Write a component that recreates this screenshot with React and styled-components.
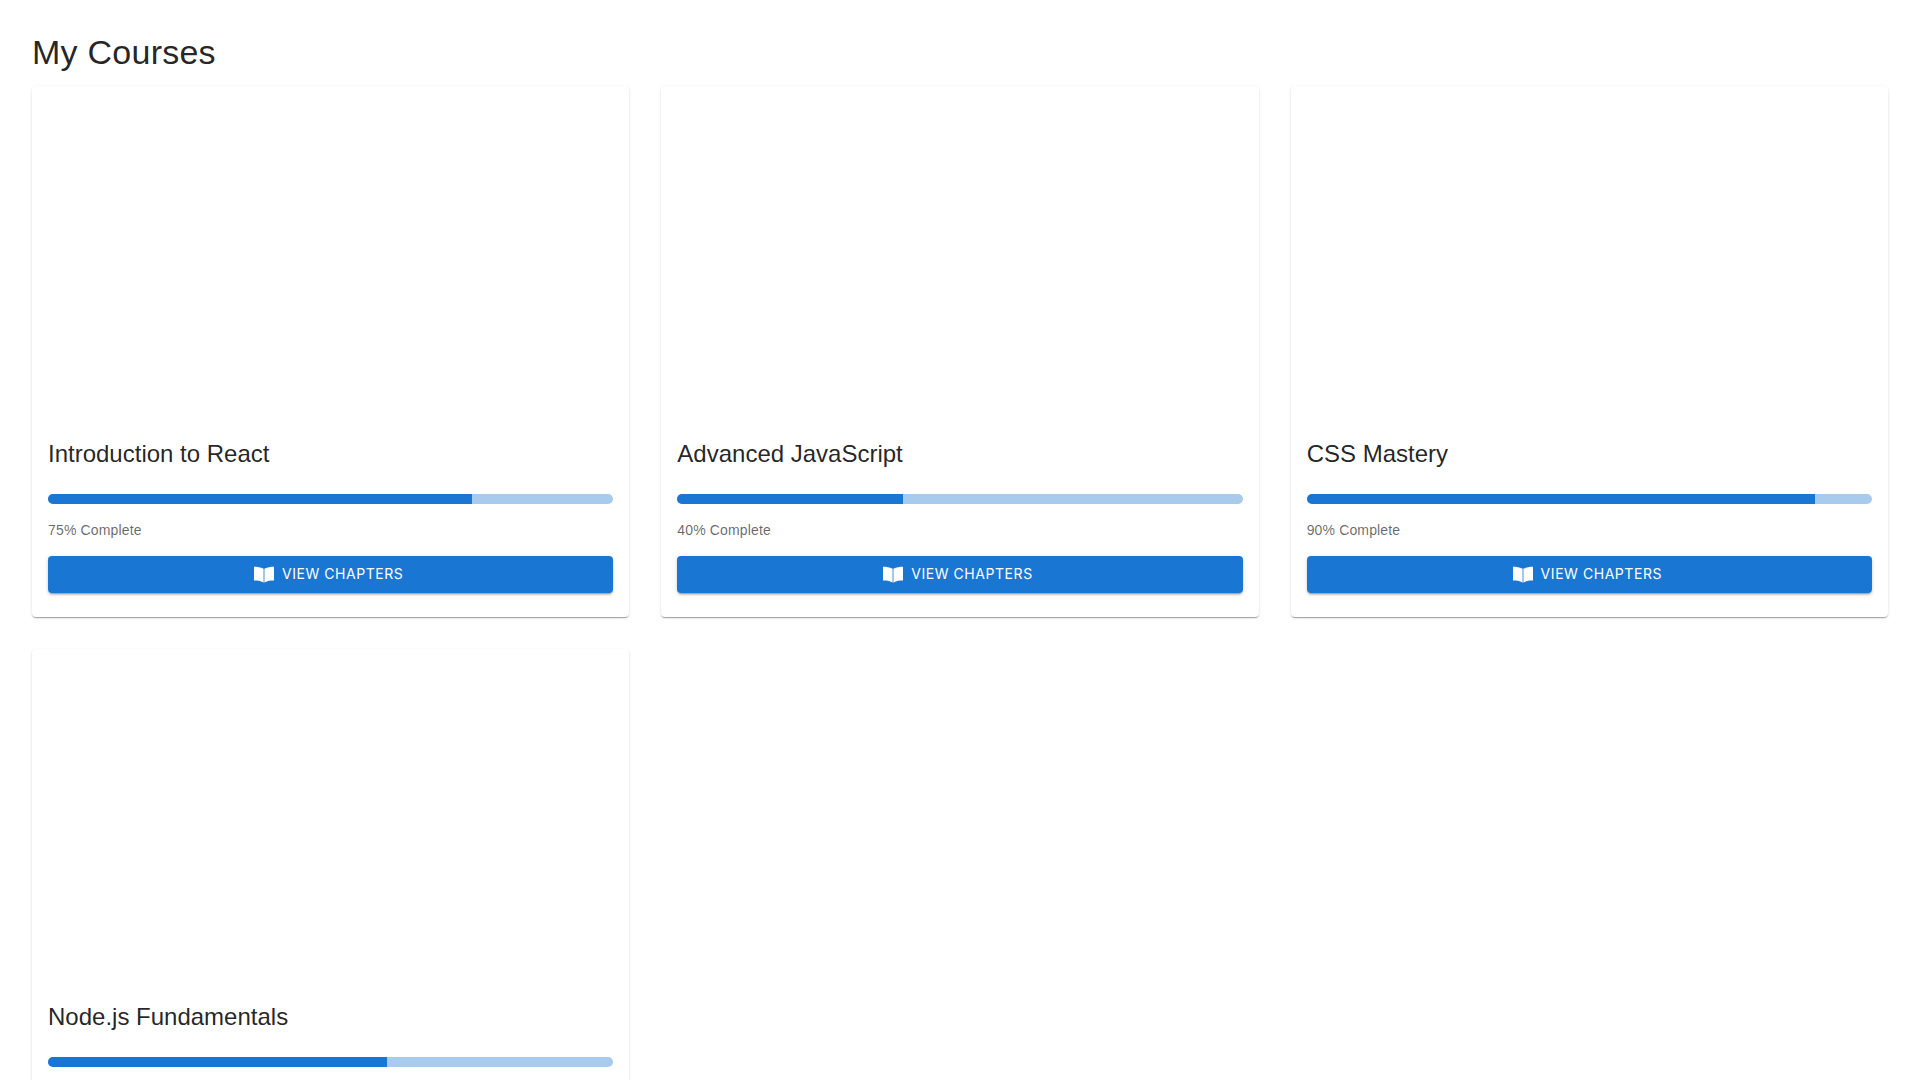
import React from 'react';
import styled, { createGlobalStyle } from 'styled-components';

const Global = createGlobalStyle`
  html, body { margin: 0; padding: 0; background: #fff; }
  body { font-family: "Liberation Sans", Arial, sans-serif; color: rgba(0,0,0,.87); }
`;

const Page = styled.main`
  padding: 31px 32px 32px;
`;
const Heading = styled.h1`
  margin: 0 0 13px;
  font: 400 34px/42px "Liberation Sans", Arial, sans-serif;
  letter-spacing: .25px;
`;
const Grid = styled.div`
  display: grid;
  grid-template-columns: repeat(3, 1fr);
  gap: 32px;
`;
const Card = styled.article`
  background: #fff;
  border-radius: 4px;
  overflow: hidden;
  box-shadow: 0 2px 1px -1px rgba(0,0,0,.2), 0 1px 1px 0 rgba(0,0,0,.14), 0 1px 3px 0 rgba(0,0,0,.12);
`;
const Media = styled.div`
  height: 336px;
`;
const Body = styled.div`
  padding: 16px 16px 24.5px;
`;
const Title = styled.h2`
  margin: 0 0 24px;
  font: 400 24px/32px "Liberation Sans", Arial, sans-serif;
`;
const Track = styled.div`
  height: 10px;
  border-radius: 5px;
  background: #a7caed;
  overflow: hidden;
  margin-bottom: 16px;
`;
const Fill = styled.div`
  height: 100%;
  background: #1976d2;
`;
const Progress = styled.p`
  margin: 0 0 16px;
  font: 400 14px/20px "Liberation Sans", Arial, sans-serif;
  letter-spacing: .15px;
  color: rgba(0,0,0,.6);
`;
const Button = styled.button`
  display: flex;
  align-items: center;
  justify-content: center;
  width: 100%;
  height: 36.5px;
  padding: 6px 16px;
  border: 0;
  border-radius: 4px;
  background: #1976d2;
  color: #fff;
  font: 400 14px/24.5px Inter, sans-serif;
  letter-spacing: .55px;
  text-transform: uppercase;
  box-shadow: 0 3px 1px -2px rgba(0,0,0,.2), 0 2px 2px 0 rgba(0,0,0,.14), 0 1px 5px 0 rgba(0,0,0,.12);
`;
const Icon = styled.svg`
  width: 20px;
  height: 20px;
  margin: 0 8px 0 -4px;
  fill: currentColor;
`;

const BookIcon = () => (
  <Icon viewBox="0 0 20 20" aria-hidden="true">
    <path d="M0 2.8C3.4 2.8 6.8 3.2 9 4.6V18.3C6.8 17 3.4 16.6 0 16.6Z" />
    <path d="M20 2.8C16.6 2.8 13.2 3.2 11 4.6V18.3C13.2 17 16.6 16.6 20 16.6Z" />
    <path d="M9 4.6H11V18.3L10 18.7 9 18.3Z" opacity=".6" />
  </Icon>
);

const courses = [
  { title: 'Introduction to React', progress: 75 },
  { title: 'Advanced JavaScript', progress: 40 },
  { title: 'CSS Mastery', progress: 90 },
  { title: 'Node.js Fundamentals', progress: 60 },
];

export default function App() {
  return (
    <Page>
      <Global />
      <Heading>My Courses</Heading>
      <Grid>
        {courses.map((c) => (
          <Card key={c.title}>
            <Media />
            <Body>
              <Title>{c.title}</Title>
              <Track><Fill style={{ width: `${c.progress}%` }} /></Track>
              <Progress>{c.progress}% Complete</Progress>
              <Button><BookIcon />View Chapters</Button>
            </Body>
          </Card>
        ))}
      </Grid>
    </Page>
  );
}
